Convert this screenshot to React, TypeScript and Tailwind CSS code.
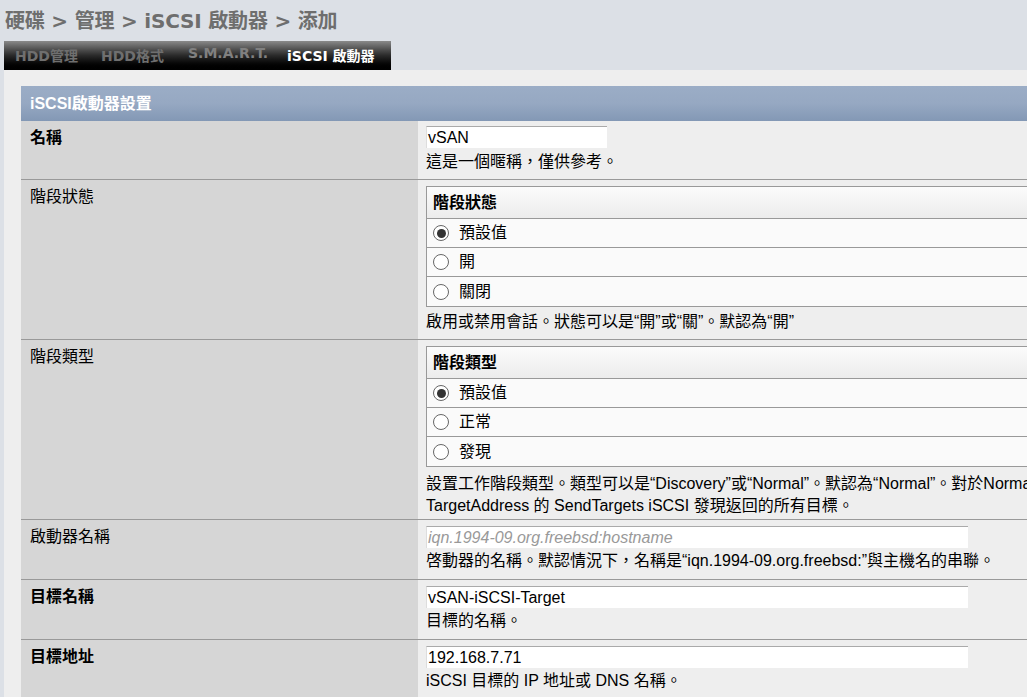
import React from "react";

const FONT = { fontFamily: '"Liberation Sans", "Noto Sans CJK TC", sans-serif' };
const TITLE_FONT = { fontFamily: '"DejaVu Sans", "Noto Sans CJK TC", sans-serif' };

function TextInput({ value, placeholder, wide }: { value?: string; placeholder?: string; wide?: boolean }) {
  return (
    <div
      className={`h-[22px] bg-white border-t border-[#aaa] border-l border-l-[#ddd] flex items-center px-[1px] ${
        wide ? "w-[542px]" : "w-[181px]"
      }`}
    >
      {value ? (
        <span className="text-black">{value}</span>
      ) : (
        <span className="text-[#999] italic">{placeholder}</span>
      )}
    </div>
  );
}

function Radio({ checked }: { checked?: boolean }) {
  return (
    <span className="w-[16px] h-[16px] rounded-full border border-[#666] bg-white flex items-center justify-center shrink-0">
      {checked && <span className="w-[9px] h-[9px] rounded-full bg-[#333]" />}
    </span>
  );
}

function OptionTable({ title, options }: { title: string; options: string[] }) {
  return (
    <div className="w-[700px] border border-[#999]">
      <div className="h-[32px] flex items-center pl-[6px] font-bold bg-gradient-to-b from-[#fbfbfb] to-[#ececec] border-b border-[#999]">
        {title}
      </div>
      {options.map((o, i) => (
        <div
          key={o}
          className={`h-[29px] flex items-center gap-[10px] pl-[6px] bg-[#fafafa] ${
            i < options.length - 1 ? "border-b border-[#999]" : ""
          }`}
        >
          <Radio checked={i === 0} />
          <span>{o}</span>
        </div>
      ))}
    </div>
  );
}

function Row({
  label,
  bold,
  pt = "pt-[6px]",
  pb = "pb-[7px]",
  children,
}: {
  label: string;
  bold?: boolean;
  pt?: string;
  pb?: string;
  children: React.ReactNode;
}) {
  return (
    <div className="flex border-b border-[#999]">
      <div className={`w-[397px] shrink-0 bg-[#d6d6d6] pl-[9px] pt-[6px] ${bold ? "font-bold" : ""}`}>{label}</div>
      <div className={`flex-1 pl-[8px] bg-[#eeeeee] ${pt} ${pb}`}>{children}</div>
    </div>
  );
}

export default function App() {
  return (
    <div className="w-[1027px] h-[697px] overflow-hidden bg-[#dce0e6] text-[16px] leading-[22px] text-black" style={FONT}>
      <div className="h-[41px] pl-[5px] flex items-center">
        <h1 className="text-[20px] font-bold text-[#6e6e6e] tracking-[-0.2px]" style={TITLE_FONT}>
          硬碟 &gt; 管理 &gt; iSCSI 啟動器 &gt; 添加
        </h1>
      </div>
      <div className="ml-[4px] w-[2000px]">
        <div
          className="w-[387px] h-[29px] bg-gradient-to-b from-[#8a8a8a] via-[#2a2a2a] to-[#000] flex items-center text-[14px] font-bold"
          style={TITLE_FONT}
        >
          <span className="ml-[11px] w-[86px] text-[#6f6f6f]">HDD管理</span>
          <span className="w-[87px] text-[#6f6f6f]">HDD格式</span>
          <span className="w-[99px] text-[#808080] -mt-[6px]">S.M.A.R.T.</span>
          <span className="text-white">iSCSI 啟動器</span>
        </div>
        <div className="bg-[#eeeeee] pt-[16px] pl-[17px] h-[700px]">
          <div className="w-[1400px]">
            <div className="h-[35px] flex items-center pl-[9px] bg-gradient-to-b from-[#9badc6] via-[#96a8c2] to-[#8398b5] text-white font-bold">
              iSCSI啟動器設置
            </div>
            <Row label="名稱" bold pt="pt-[5px]" pb="pb-[6px]">
              <TextInput value="vSAN" />
              <div className="mt-[3px]">這是一個暱稱，僅供參考。</div>
            </Row>
            <Row label="階段狀態" pb="pb-[6px]">
              <OptionTable title="階段狀態" options={["預設值", "開", "關閉"]} />
              <div className="mt-[4px]">啟用或禁用會話。狀態可以是“開”或“關”。默認為“開”</div>
            </Row>
            <Row label="階段類型" pb="pb-[2px]">
              <OptionTable title="階段類型" options={["預設值", "正常", "發現"]} />
              <div className="mt-[6px] whitespace-nowrap">
                設置工作階段類型。類型可以是“Discovery”或“Normal”。默認為“Normal”。對於Normal會話，必須指定TargetName。對於Discovery會話，會話將返回由
                <br />
                TargetAddress 的 SendTargets iSCSI 發現返回的所有目標。
              </div>
            </Row>
            <Row label="啟動器名稱">
              <TextInput placeholder="iqn.1994-09.org.freebsd:hostname" wide />
              <div className="mt-[2px]">啓動器的名稱。默認情況下，名稱是“iqn.1994-09.org.freebsd:”與主機名的串聯。</div>
            </Row>
            <Row label="目標名稱" bold>
              <TextInput value="vSAN-iSCSI-Target" wide />
              <div className="mt-[2px]">目標的名稱。</div>
            </Row>
            <Row label="目標地址" bold>
              <TextInput value="192.168.7.71" wide />
              <div className="mt-[2px]">iSCSI 目標的 IP 地址或 DNS 名稱。</div>
            </Row>
          </div>
        </div>
      </div>
    </div>
  );
}
